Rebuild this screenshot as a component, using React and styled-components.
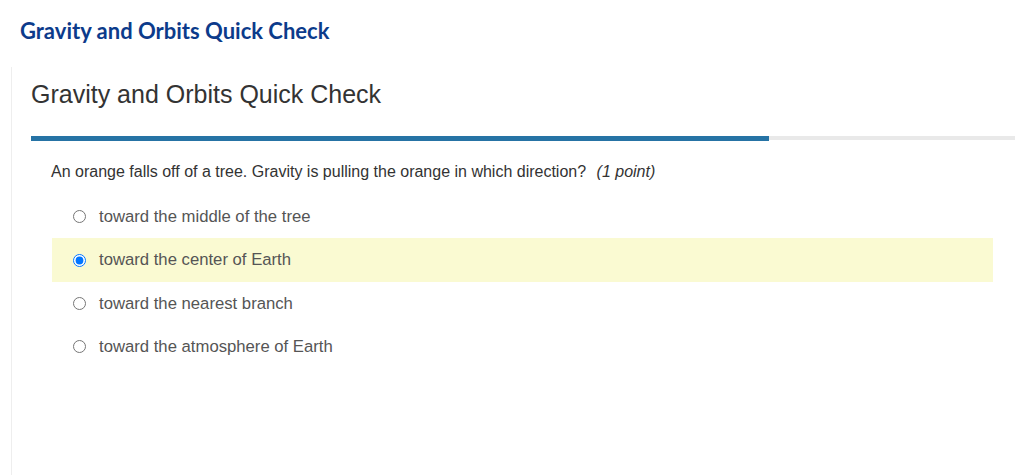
import React from "react";
import styled, { createGlobalStyle } from "styled-components";

const Global = createGlobalStyle`
  html, body {
    margin: 0;
    padding: 0;
    background: #fff;
  }
`;

const Pagina = styled.div`
  width: 1031px;
  height: 475px;
  overflow: hidden;
  font-family: "Liberation Sans", Arial, sans-serif;
`;

const Encabezado = styled.h1`
  margin: 0;
  padding: 17px 20px 0;
  height: 50px;
  box-sizing: border-box;
  font-family: Lato, "Liberation Sans", sans-serif;
  font-weight: 700;
  font-size: 22px;
  line-height: 28px;
  color: #0c3b8b;
`;

const Panel = styled.section`
  margin: 17px 16px 0 11px;
  border-left: 1px solid #eeeeee;
  padding: 12px 0 0 19px;
  height: 420px;
`;

const Titulo = styled.h2`
  margin: 0;
  font-weight: 400;
  font-size: 25px;
  line-height: 30px;
  color: #333;
`;

const Barra = styled.div`
  margin-top: 27px;
  display: flex;
  align-items: flex-start;
  height: 5px;
`;

const Relleno = styled.div`
  height: 5px;
  background: #2673a5;
`;

const Resto = styled.div`
  flex: 1;
  height: 4px;
  background: #e9e9e9;
`;

const Pregunta = styled.p`
  margin: 21px 0 0 20px;
  font-size: 16px;
  line-height: 20px;
  color: #333;
  em {
    margin-left: 6px;
  }
`;

const Opciones = styled.ul`
  list-style: none;
  margin: 13px 22px 0 21px;
  padding: 0;
`;

const Opcion = styled.li`
  display: flex;
  align-items: center;
  height: ${(p) => (p.$activa ? "44px" : "43px")};
  padding-left: 21px;
  background: ${(p) => (p.$activa ? "#fafad2" : "transparent")};
  font-size: 16.7px;
  color: #555;
  input {
    width: 13px;
    height: 13px;
    margin: 0 13px 0 0;
  }
`;

const opciones = [
  "toward the middle of the tree",
  "toward the center of Earth",
  "toward the nearest branch",
  "toward the atmosphere of Earth",
];

const App = () => {
  return (
    <Pagina>
      <Global />
      <Encabezado>Gravity and Orbits Quick Check</Encabezado>
      <Panel>
        <Titulo>Gravity and Orbits Quick Check</Titulo>
        <Barra>
          <Relleno style={{ width: "738px" }} />
          <Resto />
        </Barra>
        <Pregunta>
          An orange falls off of a tree. Gravity is pulling the orange in which
          direction? <em>(1 point)</em>
        </Pregunta>
        <Opciones>
          {opciones.map((texto, i) => (
            <Opcion key={texto} $activa={i === 1}>
              <input type="radio" name="resp" checked={i === 1} readOnly />
              {texto}
            </Opcion>
          ))}
        </Opciones>
      </Panel>
    </Pagina>
  );
};

export default App;
